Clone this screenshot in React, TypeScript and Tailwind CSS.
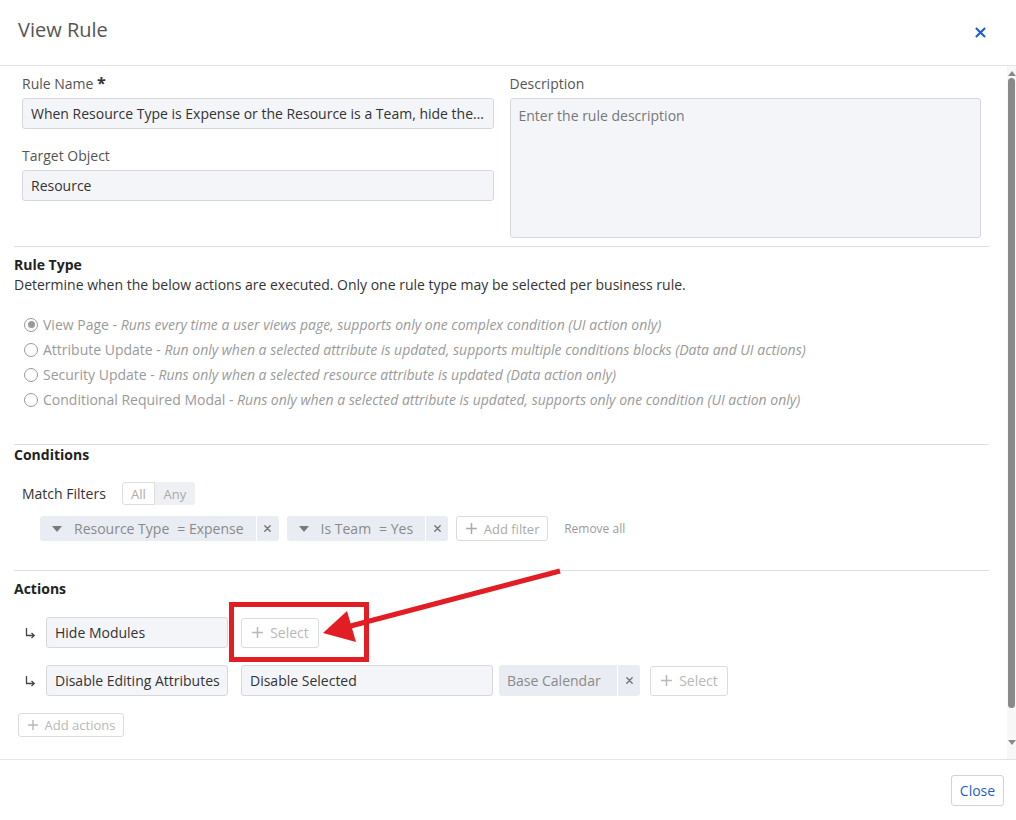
import React from 'react';

const ruleTypes = [
  { name: 'View Page', desc: 'Runs every time a user views page, supports only one complex condition (UI action only)', checked: true },
  { name: 'Attribute Update', desc: 'Run only when a selected attribute is updated, supports multiple conditions blocks (Data and UI actions)', checked: false },
  { name: 'Security Update', desc: 'Runs only when a selected resource attribute is updated (Data action only)', checked: false },
  { name: 'Conditional Required Modal', desc: 'Runs only when a selected attribute is updated, supports only one condition (UI action only)', checked: false },
];

function PlusIcon({ className = '' }: { className?: string }) {
  return (
    <svg viewBox="0 0 12 12" className={className} fill="none" stroke="currentColor" strokeWidth="1.4">
      <path d="M6 1v10M1 6h10" />
    </svg>
  );
}

function XIcon({ className = '' }: { className?: string }) {
  return (
    <svg viewBox="0 0 10 10" className={className} fill="none" stroke="currentColor" strokeWidth="1.6" strokeLinecap="round">
      <path d="M2 2l6 6M8 2l-6 6" />
    </svg>
  );
}

function ReturnArrow() {
  return (
    <svg viewBox="0 0 12 12" className="w-[12px] h-[12px] text-[#444]" fill="none" stroke="currentColor" strokeWidth="1.3">
      <path d="M2.5 1v7.5H10" />
      <path d="M7.5 6l2.7 2.5L7.5 11" />
    </svg>
  );
}

function Caret() {
  return (
    <svg viewBox="0 0 10 6" className="w-[10px] h-[6px] text-[#7a7a7a]" fill="currentColor">
      <path d="M0 0h10L5 6z" />
    </svg>
  );
}

function Radio({ checked }: { checked: boolean }) {
  return (
    <span className="w-[14px] h-[14px] rounded-full border-[1.5px] border-[#9a9a9a] flex items-center justify-center shrink-0 bg-white">
      {checked && <span className="w-[7px] h-[7px] rounded-full bg-[#9a9a9a]" />}
    </span>
  );
}

function FilterChip({ label, value }: { label: string; value: string }) {
  return (
    <div className="flex h-[25px] rounded-[3px] bg-[#e9ecf3] text-[#8a8a8a]">
      <div className="flex items-center pl-[12px] pr-[12px]">
        <Caret />
        <span className="ml-[12px]">{label}</span>
        <span className="ml-[8px]">= {value}</span>
      </div>
      <div className="w-[1px] bg-white" />
      <div className="w-[22px] flex items-center justify-center">
        <XIcon className="w-[9px] h-[9px] text-[#777]" />
      </div>
    </div>
  );
}

function SelectButton() {
  return (
    <button className="w-[78px] h-[30px] border border-[#dcdcdc] rounded-[3px] bg-white flex items-center justify-center gap-[6px] text-[14px] text-[#b8b8b8]">
      <PlusIcon className="w-[13px] h-[13px]" />
      Select
    </button>
  );
}

function Field({ value, className = '', clip = true }: { value: string; className?: string; clip?: boolean }) {
  return (
    <div className={`h-[31px] bg-[#f4f5f9] border border-[#d6d8de] rounded-[3px] px-[8px] flex items-center text-[14px] text-[#333] ${className}`}>
      <span className={clip ? 'truncate' : 'whitespace-nowrap'}>{value}</span>
    </div>
  );
}

export default function App() {
  return (
    <div className="relative w-[1016px] h-[820px] flex flex-col bg-white font-['Open_Sans',sans-serif] text-[14px] text-[#333] overflow-hidden">
      {/* Header */}
      <header className="h-[66px] shrink-0 flex items-start justify-between pl-[18px] pr-[30px] pt-[16px] border-b border-[#e3e3e3]">
        <h1 className="text-[20px] leading-[28px] text-[#555]">View Rule</h1>
        <svg viewBox="0 0 12 12" className="w-[11px] h-[11px] mt-[11px] text-[#1f5fcf]" fill="none" stroke="currentColor" strokeWidth="2.3">
          <path d="M1 1l10 10M11 1L1 11" />
        </svg>
      </header>

      {/* Body */}
      <div className="flex-1 flex min-h-0">
        <div className="flex-1 pl-[14px] pr-[18px] pt-[8px] leading-[20px]">
          {/* Name / target / description */}
          <div className="grid grid-cols-2 gap-x-[16px] px-[8px] pb-[8px] border-b border-[#dedede]">
            <div>
              <div className="h-[20px] text-[#555]">
                Rule Name <span className="text-[16px] leading-[0] font-bold text-[#333]">*</span>
              </div>
              <Field className="mt-[4px]" value="When Resource Type is Expense or the Resource is a Team, hide the…" />
              <div className="mt-[17px] text-[#555]">Target Object</div>
              <Field className="mt-[4px]" value="Resource" />
            </div>
            <div>
              <div className="text-[#555]">Description</div>
              <div className="mt-[4px] h-[140px] bg-[#f4f5f9] border border-[#d6d8de] rounded-[3px] px-[8px] pt-[7px] text-[#777]">
                Enter the rule description
              </div>
            </div>
          </div>

          {/* Rule type */}
          <div className="pt-[8px] pb-[32px] border-b border-[#dedede]">
            <div className="font-bold text-[#222]">Rule Type</div>
            <div className="text-[#333]">Determine when the below actions are executed. Only one rule type may be selected per business rule.</div>
            <div className="mt-[17px] pl-[10px]">
              {ruleTypes.map((r) => (
                <div key={r.name} className="h-[25px] flex items-center gap-[5px] text-[#9a9a9a]">
                  <Radio checked={r.checked} />
                  <span>
                    {r.name} - <span className="italic">{r.desc}</span>
                  </span>
                </div>
              ))}
            </div>
          </div>

          {/* Conditions */}
          <div className="pb-[29px] border-b border-[#dedede]">
            <div className="font-bold text-[#222]">Conditions</div>
            <div className="mt-[17px] pl-[8px] flex items-center gap-[16px]">
              <span className="text-[#333]">Match Filters</span>
              <div className="flex h-[23px] rounded-[3px] text-[13px] text-[#aaa]">
                <span className="w-[33px] flex items-center justify-center border border-[#dedede] bg-white rounded-l-[3px]">All</span>
                <span className="w-[40px] flex items-center justify-center bg-[#eef0f3] rounded-r-[3px]">Any</span>
              </div>
            </div>
            <div className="mt-[11px] pl-[26px] flex items-center">
              <FilterChip label="Resource Type" value="Expense" />
              <div className="ml-[8px]">
                <FilterChip label="Is Team" value="Yes" />
              </div>
              <button className="ml-[8px] w-[92px] h-[25px] border border-[#dcdcdc] rounded-[3px] bg-white flex items-center justify-center gap-[6px] text-[13px] text-[#aaa]">
                <PlusIcon className="w-[13px] h-[13px]" />
                Add filter
              </button>
              <span className="ml-[16px] text-[12px] text-[#9a9a9a]">Remove all</span>
            </div>
          </div>

          {/* Actions */}
          <div className="pt-[8px]">
            <div className="font-bold text-[#222]">Actions</div>
            <div className="mt-[18px] pl-[10px] flex items-center">
              <span className="w-[22px] flex"><ReturnArrow /></span>
              <Field className="w-[182px]" value="Hide Modules" />
              <div className="ml-[13px]">
                <SelectButton />
              </div>
            </div>
            <div className="mt-[17px] pl-[10px] flex items-center">
              <span className="w-[22px] flex"><ReturnArrow /></span>
              <Field className="w-[182px] px-[7px]" clip={false} value="Disable Editing Attributes" />
              <Field className="ml-[13px] w-[252px]" value="Disable Selected" />
              <div className="ml-[6px] flex h-[31px] w-[141px] rounded-[3px] bg-[#e9ecf3] text-[#8a8a8a]">
                <div className="flex-1 flex items-center pl-[8px]">Base Calendar</div>
                <div className="w-[1px] bg-white" />
                <div className="w-[22px] flex items-center justify-center">
                  <XIcon className="w-[9px] h-[9px] text-[#777]" />
                </div>
              </div>
              <div className="ml-[10px]">
                <SelectButton />
              </div>
            </div>
            <button className="mt-[17px] ml-[4px] w-[106px] h-[24px] border border-[#dcdcdc] rounded-[3px] bg-white flex items-center justify-center gap-[6px] text-[13px] text-[#b8b8b8]">
              <PlusIcon className="w-[12px] h-[12px]" />
              Add actions
            </button>
          </div>
        </div>

        {/* Scrollbar */}
        <div className="w-[9px] bg-[#f7f7f7] flex flex-col items-center">
          <svg viewBox="0 0 8 5" className="w-[8px] h-[5px] mt-[5px] text-[#8a8a8a]" fill="currentColor">
            <path d="M4 0L8 5H0z" />
          </svg>
          <div className="mt-[2px] w-[7px] h-[630px] rounded-[4px] bg-[#8a8a8a]" />
          <div className="flex-1" />
          <svg viewBox="0 0 8 5" className="w-[8px] h-[5px] mb-[14px] text-[#8a8a8a]" fill="currentColor">
            <path d="M0 0h8L4 5z" />
          </svg>
        </div>
      </div>

      {/* Footer */}
      <footer className="h-[61px] shrink-0 flex items-center justify-end pr-[12px] border-t border-[#e3e3e3]">
        <button className="w-[53px] h-[31px] border border-[#d3d3d3] rounded-[3px] bg-white text-[14px] text-[#1f5fcf]">Close</button>
      </footer>

      {/* Annotation overlay */}
      <svg className="absolute left-0 top-0 pointer-events-none" width="1016" height="820" viewBox="0 0 1016 820">
        <rect x="231.5" y="604.5" width="135" height="55" fill="none" stroke="#e21d23" strokeWidth="5" />
        <line x1="560" y1="571" x2="343" y2="628" stroke="#e21d23" strokeWidth="5" />
        <polygon points="323,633 347,611 356,642" fill="#e21d23" />
      </svg>
    </div>
  );
}
